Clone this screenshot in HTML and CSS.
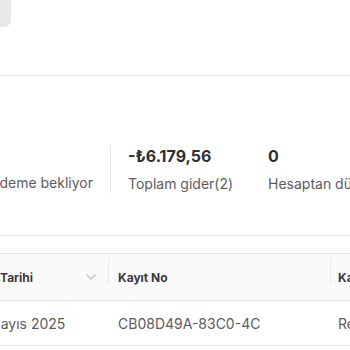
FILE: index.html
```html
<!DOCTYPE html>
<html lang="tr">
<head>
<meta charset="utf-8">
<link rel="stylesheet" href="styles.css">
</head>
<body>
<div class="page">
  <div class="top">
    <div class="tab-stub"></div>
  </div>
  <div class="stats">
    <div class="stat stat-first">
      <div class="stat-value"></div>
      <div class="stat-label">Ödeme bekliyor</div>
    </div>
    <div class="stat stat-second">
      <div class="stat-value">-₺6.179,56</div>
      <div class="stat-label">Toplam gider(2)</div>
    </div>
    <div class="stat">
      <div class="stat-value">0</div>
      <div class="stat-label">Hesaptan düşülen</div>
    </div>
  </div>
  <div class="toolbar-line"></div>
  <div class="table-wrap">
    <div class="row head">
      <div class="cell c1"><span>Tarihi</span>
        <svg class="chev" width="12" height="8" viewBox="0 0 12 8"><path d="M1.5 1.5 L6 6 L10.5 1.5" fill="none" stroke="#c4c4c4" stroke-width="1.3"/></svg>
      </div>
      <div class="cell c2 sep">Kayıt No</div>
      <div class="cell c3 sep">Kategori</div>
    </div>
    <div class="row body">
      <div class="cell c1 shift">Mayıs 2025</div>
      <div class="cell c2">CB08D49A-83C0-4C</div>
      <div class="cell c3">Reklam</div>
    </div>
  </div>
</div>
</body>
</html>
```

FILE: styles.css
```css
html, body {
  margin: 0;
  padding: 0;
  background: #ffffff;
  overflow: hidden;
}
.page {
  width: 350px;
  height: 350px;
  overflow: hidden;
  font-family: Inter, "Noto Sans", sans-serif;
}
.top {
  height: 76px;
  border-bottom: 1px solid #e4e4e4;
  box-sizing: border-box;
}
.tab-stub {
  width: 11px;
  height: 27px;
  background: #e9e9e9;
  border-bottom-right-radius: 7px;
}
.stats {
  display: flex;
  margin-top: 69px;
  height: 48px;
  white-space: nowrap;
}
.stat {
  display: flex;
  flex-direction: column;
  gap: 8px;
  flex: none;
}
.stat-first {
  width: 93px;
  padding-right: 17px;
  border-right: 1px solid #e6e6e6;
  align-items: flex-end;
  overflow: hidden;
}
.stat-second {
  width: 140px;
  padding-left: 17px;
}
.stat-value {
  height: 20px;
  line-height: 20px;
  font-size: 16px;
  font-weight: 700;
  color: #2f2f2f;
  margin-top: 1px;
}
.stat-label {
  height: 20px;
  line-height: 20px;
  font-size: 14px;
  color: #5c5c5c;
}
.toolbar-line {
  margin-top: 42px;
  height: 1px;
  background: #e4e4e4;
}
.table-wrap {
  margin-top: 17px;
  white-space: nowrap;
}
.row {
  display: flex;
  align-items: center;
  border-top: 1px solid #e4e4e4;
}
.row.head {
  height: 46px;
  background: #fafafa;
  font-size: 12px;
  font-weight: 700;
  color: #3a3a3a;
}
.row.body {
  height: 44px;
  font-size: 14px;
  color: #5c5c5c;
  border-bottom: 1px solid #e4e4e4;
}
.cell {
  flex: none;
  box-sizing: border-box;
  position: relative;
  overflow: hidden;
}
.c1 {
  width: 108px;
  display: flex;
  align-items: center;
  justify-content: space-between;
  padding-right: 11px;
}
.c1.shift {
  margin-left: -12px;
  width: 120px;
  display: block;
}
.c2 {
  width: 222px;
  padding-left: 10px;
}
.c3 {
  width: 60px;
  padding-left: 8px;
}
.sep::before {
  content: "";
  position: absolute;
  left: 0;
  top: -12px;
  width: 1px;
  height: 25px;
  background: #e8e8e8;
}
.sep {
  overflow: visible;
}
.chev {
  display: block;
}
```
